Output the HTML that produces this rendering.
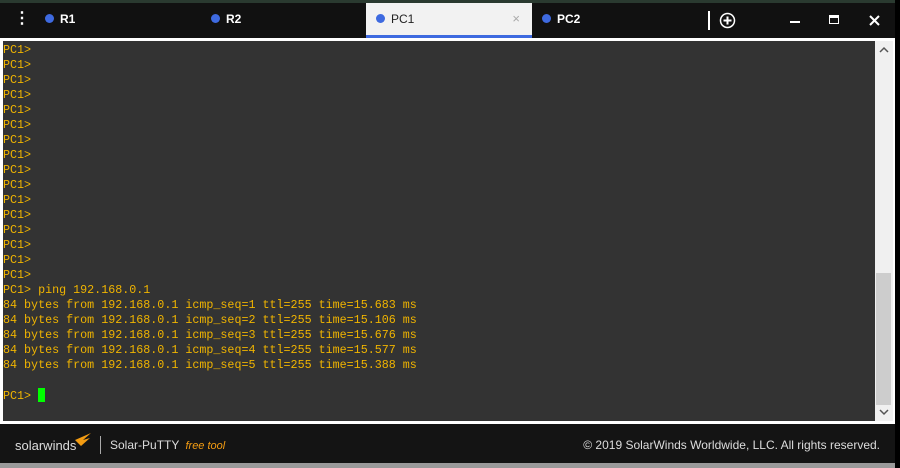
<!DOCTYPE html>
<html><head><style>
*{margin:0;padding:0;box-sizing:border-box}
body{width:900px;height:468px;overflow:hidden;background:#9a9a9a;position:relative;font-family:"Liberation Sans",sans-serif}
.top{position:absolute;left:0;top:0;width:900px;height:4px;background:#2a3a30}
.tabs{position:absolute;left:0;top:3px;width:895px;height:35px;background:#111}
.tab{position:absolute;top:0;height:35px;color:#fff;font-weight:bold;font-size:12px;line-height:32px}
.dot{display:inline-block;width:9px;height:9px;border-radius:50%;background:#3e6ae0;margin-right:6px;vertical-align:0}
.active{background:#f2f2f2;color:#222;border-bottom:3px solid #3e6ae0;font-weight:normal}
.term{position:absolute;left:0;top:38px;width:895px;height:386px;background:#fff}
.screen{position:absolute;left:3px;top:3px;width:872px;height:380px;background:#333;font-family:"Liberation Mono",monospace;font-size:11.7px;line-height:15px;color:#f0b400;white-space:pre;padding-top:2px}
.sb{position:absolute;left:875px;top:3px;width:18px;height:380px;background:#f0f0f0}
.thumb{position:absolute;left:1px;top:232px;width:15px;height:132px;background:#cdcdcd}
.foot{position:absolute;left:0;top:424px;width:895px;height:39px;background:#141414;color:#ddd;font-size:12px}
.right{position:absolute;left:895px;top:0;width:5px;height:468px;background:#000}
</style></head><body>
<div class="top"></div>
<div class="right"></div>
<div class="tabs">
 <div class="tab" style="left:14px;font-size:16px;line-height:32px">⋮</div>
 <div class="tab" style="left:45px"><span class="dot"></span>R1</div>
 <div class="tab" style="left:211px"><span class="dot"></span>R2</div>
 <div class="tab active" style="left:366px;width:166px;padding-left:10px"><span class="dot"></span>PC1<span style="position:absolute;right:12px;color:#aaa;font-size:13px">×</span></div>
 <div class="tab" style="left:542px"><span class="dot"></span>PC2</div>
 <div style="position:absolute;left:708px;top:8px;width:2px;height:19px;background:#fff"></div>
 <svg style="position:absolute;left:719px;top:9px" width="17" height="17"><circle cx="8.5" cy="8.5" r="7" fill="none" stroke="#fff" stroke-width="1.5"/><path d="M8.5 4.5v8M4.5 8.5h8" stroke="#fff" stroke-width="2"/></svg>
 <div style="position:absolute;left:790px;top:18px;width:10px;height:2px;background:#fff"></div>
 <div style="position:absolute;left:829px;top:12px;width:10px;height:9px;border:1.5px solid #fff;border-top-width:3px"></div>
 <svg style="position:absolute;left:869px;top:12px" width="11" height="11"><path d="M1 1L10 10M10 1L1 10" stroke="#fff" stroke-width="2"/></svg>
</div>
<div class="term">
<div class="screen">PC1&gt;
PC1&gt;
PC1&gt;
PC1&gt;
PC1&gt;
PC1&gt;
PC1&gt;
PC1&gt;
PC1&gt;
PC1&gt;
PC1&gt;
PC1&gt;
PC1&gt;
PC1&gt;
PC1&gt;
PC1&gt;
PC1&gt; ping 192.168.0.1
84 bytes from 192.168.0.1 icmp_seq=1 ttl=255 time=15.683 ms
84 bytes from 192.168.0.1 icmp_seq=2 ttl=255 time=15.106 ms
84 bytes from 192.168.0.1 icmp_seq=3 ttl=255 time=15.676 ms
84 bytes from 192.168.0.1 icmp_seq=4 ttl=255 time=15.577 ms
84 bytes from 192.168.0.1 icmp_seq=5 ttl=255 time=15.388 ms

PC1&gt; <span style="display:inline-block;width:7px;height:14px;background:#0f0;vertical-align:-3px"></span></div>
<div class="sb"><div class="thumb"></div>
<svg style="position:absolute;left:4px;top:5px" width="10" height="7"><path d="M1 6L5 2L9 6" fill="none" stroke="#555" stroke-width="1.5"/></svg>
<svg style="position:absolute;left:4px;top:368px" width="10" height="7"><path d="M1 1L5 5L9 1" fill="none" stroke="#555" stroke-width="1.5"/></svg>
</div>
</div>
<div class="foot">
 <div style="position:absolute;left:15px;top:14px;font-size:13px;color:#ddd">solarwinds</div>
 <svg style="position:absolute;left:73px;top:8px" width="20" height="16"><path d="M2 8L18 1L10 8L17 6L8 14Z" fill="#f39c12"/></svg>
 <div style="position:absolute;left:100px;top:12px;width:1px;height:18px;background:#aaa"></div>
 <div style="position:absolute;left:110px;top:14px">Solar-PuTTY <i style="color:#f39c12;font-size:11px;margin-left:3px">free tool</i></div>
 <div style="position:absolute;right:15px;top:14px">© 2019 SolarWinds Worldwide, LLC. All rights reserved.</div>
</div>
</body></html>
